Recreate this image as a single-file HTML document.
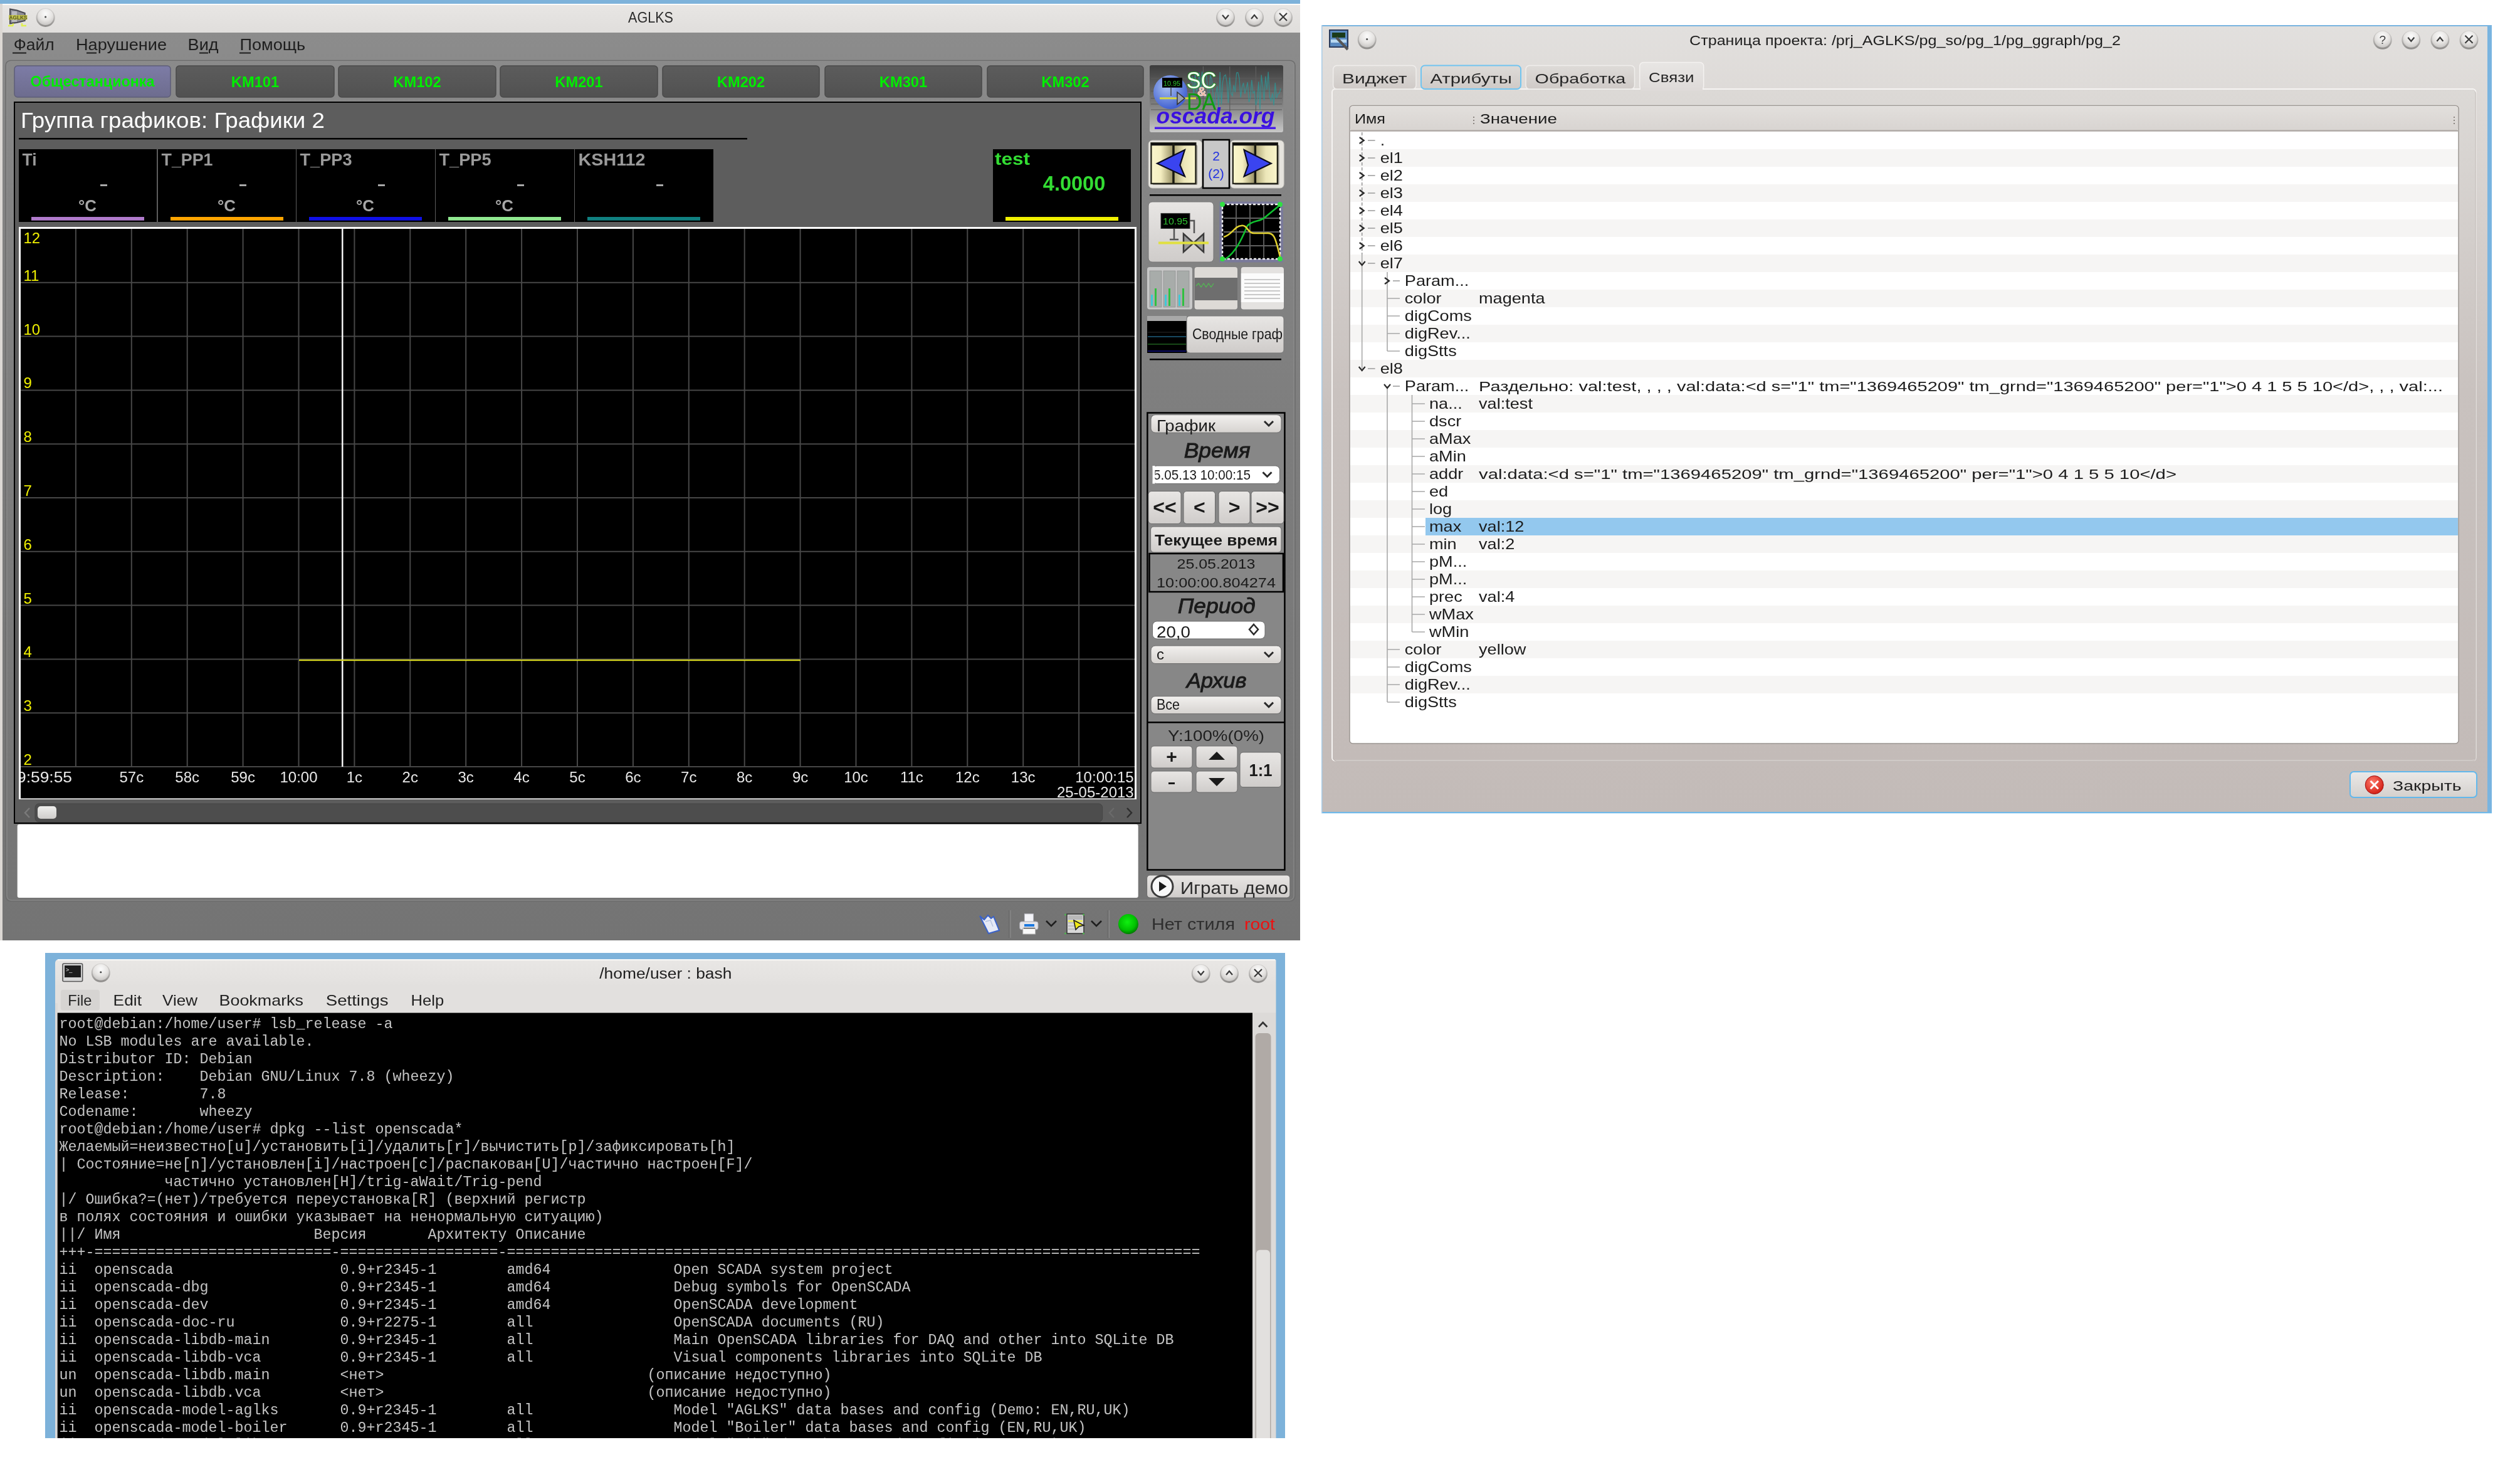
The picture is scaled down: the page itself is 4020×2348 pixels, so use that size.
<!DOCTYPE html>
<html><head><meta charset="utf-8"><style>html,body{margin:0;padding:0;width:4020px;height:2348px;overflow:hidden;background:#fff}</style></head><body><svg width="4020" height="2348" viewBox="0 0 4020 2348" style="position:absolute;left:0;top:0;will-change:transform"><defs>
<linearGradient id="gTitle" x1="0" y1="0" x2="0" y2="1"><stop offset="0" stop-color="#e8e6e4"/><stop offset="1" stop-color="#e0dedc"/></linearGradient>
<linearGradient id="gRing" x1="0" y1="0" x2="0" y2="1"><stop offset="0" stop-color="#d6d4d2"/><stop offset="0.5" stop-color="#b8b6b4"/><stop offset="1" stop-color="#8c8a88"/></linearGradient>
<linearGradient id="gTitle2" x1="0" y1="0" x2="0" y2="1"><stop offset="0" stop-color="#e9e7e5"/><stop offset="0.75" stop-color="#e2e0de"/><stop offset="1" stop-color="#e2e0de"/></linearGradient>
<radialGradient id="gBtn" cx="0.5" cy="0.3" r="0.7"><stop offset="0" stop-color="#fbfbfb"/><stop offset="0.6" stop-color="#e6e4e2"/><stop offset="1" stop-color="#c8c6c4"/></radialGradient>
<linearGradient id="gMain" x1="0" y1="0" x2="0" y2="1"><stop offset="0" stop-color="#8c8c8c"/><stop offset="0.12" stop-color="#868686"/><stop offset="0.5" stop-color="#7c7c7c"/><stop offset="1" stop-color="#747474"/></linearGradient>
<linearGradient id="gTabSel" x1="0" y1="0" x2="0" y2="1"><stop offset="0" stop-color="#7d7ca6"/><stop offset="1" stop-color="#6d6c8e"/></linearGradient>
<linearGradient id="gTab" x1="0" y1="0" x2="0" y2="1"><stop offset="0" stop-color="#5c5c5c"/><stop offset="1" stop-color="#515151"/></linearGradient>
<linearGradient id="gHandle" x1="0" y1="0" x2="0" y2="1"><stop offset="0" stop-color="#eeeeec"/><stop offset="1" stop-color="#cfcdcb"/></linearGradient>
<linearGradient id="gBtnG" x1="0" y1="0" x2="0" y2="1"><stop offset="0" stop-color="#e8e6e4"/><stop offset="1" stop-color="#cfccca"/></linearGradient>
<linearGradient id="gCombo" x1="0" y1="0" x2="0" y2="1"><stop offset="0" stop-color="#f2f0ee"/><stop offset="1" stop-color="#d6d3d0"/></linearGradient>
<linearGradient id="gLogo" x1="0" y1="0" x2="0" y2="1"><stop offset="0" stop-color="#3c3c3c"/><stop offset="0.55" stop-color="#7a7a7a"/><stop offset="1" stop-color="#c8c8c8"/></linearGradient>
<radialGradient id="gGlobe" cx="0.4" cy="0.35" r="0.7"><stop offset="0" stop-color="#a8c0f0"/><stop offset="1" stop-color="#3a5ad0"/></radialGradient>
<radialGradient id="gGreen" cx="0.45" cy="0.4" r="0.6"><stop offset="0" stop-color="#10f010"/><stop offset="0.7" stop-color="#00c000"/><stop offset="1" stop-color="#007a00"/></radialGradient>
<radialGradient id="gRed" cx="0.4" cy="0.35" r="0.7"><stop offset="0" stop-color="#ff7a6a"/><stop offset="1" stop-color="#d01a10"/></radialGradient>
<linearGradient id="gDlg" x1="0" y1="0" x2="0" y2="1"><stop offset="0" stop-color="#e2e0de"/><stop offset="0.12" stop-color="#dcd8d5"/><stop offset="0.5" stop-color="#c8c1be"/><stop offset="1" stop-color="#c3bbb8"/></linearGradient>
<linearGradient id="gPane" x1="0" y1="0" x2="0" y2="1"><stop offset="0" stop-color="#dcd9d6"/><stop offset="0.45" stop-color="#c9c2bf"/><stop offset="1" stop-color="#c3bbb8"/></linearGradient>
<linearGradient id="gTabD" x1="0" y1="0" x2="0" y2="1"><stop offset="0" stop-color="#dedbd8"/><stop offset="1" stop-color="#cfcac7"/></linearGradient>
<linearGradient id="gTabDS" x1="0" y1="0" x2="0" y2="1"><stop offset="0" stop-color="#e8e6e4"/><stop offset="1" stop-color="#dedad8"/></linearGradient>
<linearGradient id="gHdr" x1="0" y1="0" x2="0" y2="1"><stop offset="0" stop-color="#e2dfdc"/><stop offset="1" stop-color="#d8d4d1"/></linearGradient>
<linearGradient id="gBtnD" x1="0" y1="0" x2="0" y2="1"><stop offset="0" stop-color="#ebe9e7"/><stop offset="1" stop-color="#d4d0cd"/></linearGradient>
<linearGradient id="gNavL" x1="0" y1="0" x2="1" y2="0"><stop offset="0" stop-color="#faf6cc"/><stop offset="0.45" stop-color="#f4eec0"/><stop offset="1" stop-color="#9c9468"/></linearGradient>
<linearGradient id="gNavR" x1="0" y1="0" x2="1" y2="0"><stop offset="0" stop-color="#a8a070"/><stop offset="0.5" stop-color="#ece6b8"/><stop offset="1" stop-color="#faf6cc"/></linearGradient>
</defs>
<rect x="0" y="0" width="2074" height="1500" fill="#777"/>
<rect x="0" y="0" width="2074" height="6" fill="#7db2da"/>
<rect x="0" y="6" width="2074" height="46" fill="url(#gTitle)"/>
<rect x="0" y="6" width="2074" height="2" fill="#fbfbfa"/>
<rect x="0" y="6" width="4" height="1494" fill="#dcd8d4"/>
<text x="1002" y="36" font-family="Liberation Sans" font-size="23" fill="#2b2b2b" textLength="72" lengthAdjust="spacingAndGlyphs">AGLKS</text>
<circle cx="1955" cy="28" r="15" fill="url(#gRing)"/>
<circle cx="1955" cy="27" r="13" fill="url(#gBtn)"/>
<path d="M1950,24 L1955,30 L1960,24" fill="none" stroke="#3a3a3a" stroke-width="2.2"/>
<circle cx="2001" cy="28" r="15" fill="url(#gRing)"/>
<circle cx="2001" cy="27" r="13" fill="url(#gBtn)"/>
<path d="M1996,30 L2001,24 L2006,30" fill="none" stroke="#3a3a3a" stroke-width="2.2"/>
<circle cx="2047" cy="28" r="15" fill="url(#gRing)"/>
<circle cx="2047" cy="27" r="13" fill="url(#gBtn)"/>
<path d="M2041,21 L2053,33 M2053,21 L2041,33" fill="none" stroke="#3a3a3a" stroke-width="2.2"/>
<circle cx="72.6" cy="28" r="15" fill="url(#gRing)"/>
<circle cx="72.6" cy="27" r="13" fill="url(#gBtn)"/>
<circle cx="72.6" cy="27" r="1.5" fill="#444"/>
<path d="M16,14.4 L27,16.5 L39.7,21 L39.7,33 L27,36 L16,37.5 Z" fill="#8e8e98" stroke="#4a4a52" stroke-width="2"/>
<rect x="19" y="18" width="8" height="17" fill="#b8b8c0"/>
<rect x="14" y="24" width="29.5" height="7.5" fill="#c8c840" opacity="0.85"/>
<text x="14.5" y="31" font-family="Liberation Sans" font-size="9" fill="#5a5a20" font-weight="bold" textLength="29" lengthAdjust="spacingAndGlyphs">AGLKS</text>
<path d="M13,41 L20,41 L21.5,37.5" fill="none" stroke="#e0f050" stroke-width="2.6"/>
<path d="M35,37 L35,41 L42,41" fill="none" stroke="#e0f050" stroke-width="2.6"/>
<rect x="4" y="52" width="2070" height="1448" fill="url(#gMain)"/>
<text x="21.7" y="80.4" font-family="Liberation Sans" font-size="25" fill="#1e1e1e" textLength="65" lengthAdjust="spacingAndGlyphs">Файл</text>
<text x="121" y="80.4" font-family="Liberation Sans" font-size="25" fill="#1e1e1e" textLength="145" lengthAdjust="spacingAndGlyphs">Нарушение</text>
<text x="299.6" y="80.4" font-family="Liberation Sans" font-size="25" fill="#1e1e1e" textLength="49" lengthAdjust="spacingAndGlyphs">Вид</text>
<text x="382.4" y="80.4" font-family="Liberation Sans" font-size="25" fill="#1e1e1e" textLength="104.8" lengthAdjust="spacingAndGlyphs">Помощь</text>
<rect x="20" y="83.5" width="22" height="2" fill="#1e1e1e"/>
<rect x="138" y="83.5" width="16" height="2" fill="#1e1e1e"/>
<rect x="318" y="83.5" width="14" height="2" fill="#1e1e1e"/>
<rect x="382" y="83.5" width="18" height="2" fill="#1e1e1e"/>
<rect x="9" y="96.5" width="2057" height="1341" fill="none" rx="8" stroke="#6c6c6c" stroke-width="1.5"/>
<rect x="11" y="98" width="2053" height="1338" fill="none" rx="7" stroke="#8e8e8e" stroke-width="1"/>
<rect x="23" y="105" width="249" height="50" fill="url(#gTabSel)" rx="5" stroke="#5e5e78" stroke-width="1.5"/>
<text x="147.5" y="138" font-family="Liberation Sans" font-size="24" fill="#00ee00" font-weight="bold" text-anchor="middle" textLength="198" lengthAdjust="spacingAndGlyphs">Общестанционка</text>
<rect x="281" y="105" width="252" height="50" fill="url(#gTab)" rx="5" stroke="#4a4a4a" stroke-width="1.5"/>
<text x="407.0" y="138.6" font-family="Liberation Sans" font-size="24" fill="#00ee00" font-weight="bold" text-anchor="middle" textLength="76.5" lengthAdjust="spacingAndGlyphs">KM101</text>
<rect x="540" y="105" width="251" height="50" fill="url(#gTab)" rx="5" stroke="#4a4a4a" stroke-width="1.5"/>
<text x="665.5" y="138.6" font-family="Liberation Sans" font-size="24" fill="#00ee00" font-weight="bold" text-anchor="middle" textLength="76.5" lengthAdjust="spacingAndGlyphs">KM102</text>
<rect x="798" y="105" width="251" height="50" fill="url(#gTab)" rx="5" stroke="#4a4a4a" stroke-width="1.5"/>
<text x="923.5" y="138.6" font-family="Liberation Sans" font-size="24" fill="#00ee00" font-weight="bold" text-anchor="middle" textLength="76.5" lengthAdjust="spacingAndGlyphs">KM201</text>
<rect x="1057" y="105" width="250" height="50" fill="url(#gTab)" rx="5" stroke="#4a4a4a" stroke-width="1.5"/>
<text x="1182.0" y="138.6" font-family="Liberation Sans" font-size="24" fill="#00ee00" font-weight="bold" text-anchor="middle" textLength="76.5" lengthAdjust="spacingAndGlyphs">KM202</text>
<rect x="1316" y="105" width="250" height="50" fill="url(#gTab)" rx="5" stroke="#4a4a4a" stroke-width="1.5"/>
<text x="1441.0" y="138.6" font-family="Liberation Sans" font-size="24" fill="#00ee00" font-weight="bold" text-anchor="middle" textLength="76.5" lengthAdjust="spacingAndGlyphs">KM301</text>
<rect x="1575" y="105" width="249" height="50" fill="url(#gTab)" rx="5" stroke="#4a4a4a" stroke-width="1.5"/>
<text x="1699.5" y="138.6" font-family="Liberation Sans" font-size="24" fill="#00ee00" font-weight="bold" text-anchor="middle" textLength="76.5" lengthAdjust="spacingAndGlyphs">KM302</text>
<rect x="22" y="162" width="1799" height="1152" fill="#5d5d5d"/>
<rect x="23" y="163" width="1797" height="1150" fill="none" stroke="#000" stroke-width="2"/>
<text x="33" y="203.7" font-family="Liberation Sans" font-size="35" fill="#ffffff" textLength="485" lengthAdjust="spacingAndGlyphs">Группа графиков: Графики 2</text>
<rect x="30" y="220" width="1162" height="2.5" fill="#000"/>
<rect x="30" y="238" width="220" height="116" fill="#000"/>
<text x="35.5" y="263.6" font-family="Liberation Sans" font-size="27.5" fill="#9a9a9a" font-weight="bold" textLength="23" lengthAdjust="spacingAndGlyphs">Ti</text>
<rect x="160" y="294" width="11" height="3" fill="#a8a8a8"/>
<text x="125" y="337" font-family="Liberation Sans" font-size="26" fill="#a8a8a8" font-weight="bold" textLength="29" lengthAdjust="spacingAndGlyphs">°C</text>
<rect x="50" y="346" width="180" height="5.7" fill="#b07acc"/>
<rect x="252" y="238" width="220" height="116" fill="#000"/>
<text x="257.5" y="263.6" font-family="Liberation Sans" font-size="27.5" fill="#9a9a9a" font-weight="bold" textLength="82" lengthAdjust="spacingAndGlyphs">T_PP1</text>
<rect x="382" y="294" width="11" height="3" fill="#a8a8a8"/>
<text x="347" y="337" font-family="Liberation Sans" font-size="26" fill="#a8a8a8" font-weight="bold" textLength="29" lengthAdjust="spacingAndGlyphs">°C</text>
<rect x="272" y="346" width="180" height="5.7" fill="#ffa500"/>
<rect x="473" y="238" width="221" height="116" fill="#000"/>
<text x="478.5" y="263.6" font-family="Liberation Sans" font-size="27.5" fill="#9a9a9a" font-weight="bold" textLength="83" lengthAdjust="spacingAndGlyphs">T_PP3</text>
<rect x="603" y="294" width="11" height="3" fill="#a8a8a8"/>
<text x="568" y="337" font-family="Liberation Sans" font-size="26" fill="#a8a8a8" font-weight="bold" textLength="29" lengthAdjust="spacingAndGlyphs">°C</text>
<rect x="493" y="346" width="180" height="5.7" fill="#1010e8"/>
<rect x="695" y="238" width="221" height="116" fill="#000"/>
<text x="700.5" y="263.6" font-family="Liberation Sans" font-size="27.5" fill="#9a9a9a" font-weight="bold" textLength="83" lengthAdjust="spacingAndGlyphs">T_PP5</text>
<rect x="825" y="294" width="11" height="3" fill="#a8a8a8"/>
<text x="790" y="337" font-family="Liberation Sans" font-size="26" fill="#a8a8a8" font-weight="bold" textLength="29" lengthAdjust="spacingAndGlyphs">°C</text>
<rect x="715" y="346" width="180" height="5.7" fill="#90e890"/>
<rect x="917" y="238" width="221" height="116" fill="#000"/>
<text x="922.5" y="263.6" font-family="Liberation Sans" font-size="27.5" fill="#9a9a9a" font-weight="bold" textLength="107" lengthAdjust="spacingAndGlyphs">KSH112</text>
<rect x="1047" y="294" width="11" height="3" fill="#a8a8a8"/>
<rect x="937" y="346" width="180" height="5.7" fill="#108080"/>
<rect x="1584" y="238" width="220" height="116" fill="#000"/>
<text x="1587" y="263.3" font-family="Liberation Sans" font-size="27.5" fill="#33dd33" font-weight="bold" textLength="56" lengthAdjust="spacingAndGlyphs">test</text>
<text x="1663.8" y="304.4" font-family="Liberation Sans" font-size="33" fill="#33dd33" font-weight="bold" textLength="99.5" lengthAdjust="spacingAndGlyphs">4.0000</text>
<rect x="1604" y="346" width="180" height="6" fill="#f0f000"/>
<rect x="30" y="362" width="1783" height="913" fill="#fff"/>
<rect x="33" y="365" width="1777" height="908.5" fill="#000"/>
<path d="M120.9,365V1223 M209.8,365V1223 M298.7,365V1223 M387.6,365V1223 M476.5,365V1223 M565.4,365V1223 M654.3,365V1223 M743.2,365V1223 M832.1,365V1223 M921.0,365V1223 M1009.9,365V1223 M1098.8,365V1223 M1187.7,365V1223 M1276.6,365V1223 M1365.5,365V1223 M1454.4,365V1223 M1543.3,365V1223 M1632.2,365V1223 M1721.1,365V1223 M33,450.8H1810 M33,536.6H1810 M33,622.4H1810 M33,708.2H1810 M33,794.0H1810 M33,879.8H1810 M33,965.6H1810 M33,1051.4H1810 M33,1137.2H1810 M33,1223.0H1810" fill="none" stroke="#474747" stroke-width="2"/>
<text x="37.5" y="388" font-family="Liberation Sans" font-size="24" fill="#f0f000">12</text>
<text x="37.5" y="447.8" font-family="Liberation Sans" font-size="24" fill="#f0f000">11</text>
<text x="37.5" y="533.6" font-family="Liberation Sans" font-size="24" fill="#f0f000">10</text>
<text x="37.5" y="619.4" font-family="Liberation Sans" font-size="24" fill="#f0f000">9</text>
<text x="37.5" y="705.2" font-family="Liberation Sans" font-size="24" fill="#f0f000">8</text>
<text x="37.5" y="791.0" font-family="Liberation Sans" font-size="24" fill="#f0f000">7</text>
<text x="37.5" y="876.8" font-family="Liberation Sans" font-size="24" fill="#f0f000">6</text>
<text x="37.5" y="962.6" font-family="Liberation Sans" font-size="24" fill="#f0f000">5</text>
<text x="37.5" y="1048.4" font-family="Liberation Sans" font-size="24" fill="#f0f000">4</text>
<text x="37.5" y="1134.1999999999998" font-family="Liberation Sans" font-size="24" fill="#f0f000">3</text>
<text x="37.5" y="1220.0" font-family="Liberation Sans" font-size="24" fill="#f0f000">2</text>
<rect x="545" y="365" width="2.5" height="858" fill="#f4f4f4"/>
<rect x="477" y="1052" width="800" height="2.2" fill="#d8d820"/>
<text x="209.8" y="1247.7" font-family="Liberation Sans" font-size="24" fill="#e8e8e8" text-anchor="middle">57с</text>
<text x="298.70000000000005" y="1247.7" font-family="Liberation Sans" font-size="24" fill="#e8e8e8" text-anchor="middle">58с</text>
<text x="387.6" y="1247.7" font-family="Liberation Sans" font-size="24" fill="#e8e8e8" text-anchor="middle">59с</text>
<text x="476.5" y="1247.7" font-family="Liberation Sans" font-size="24" fill="#e8e8e8" text-anchor="middle">10:00</text>
<text x="565.4000000000001" y="1247.7" font-family="Liberation Sans" font-size="24" fill="#e8e8e8" text-anchor="middle">1с</text>
<text x="654.3000000000001" y="1247.7" font-family="Liberation Sans" font-size="24" fill="#e8e8e8" text-anchor="middle">2с</text>
<text x="743.2" y="1247.7" font-family="Liberation Sans" font-size="24" fill="#e8e8e8" text-anchor="middle">3с</text>
<text x="832.1" y="1247.7" font-family="Liberation Sans" font-size="24" fill="#e8e8e8" text-anchor="middle">4с</text>
<text x="921.0" y="1247.7" font-family="Liberation Sans" font-size="24" fill="#e8e8e8" text-anchor="middle">5с</text>
<text x="1009.9000000000001" y="1247.7" font-family="Liberation Sans" font-size="24" fill="#e8e8e8" text-anchor="middle">6с</text>
<text x="1098.8000000000002" y="1247.7" font-family="Liberation Sans" font-size="24" fill="#e8e8e8" text-anchor="middle">7с</text>
<text x="1187.7" y="1247.7" font-family="Liberation Sans" font-size="24" fill="#e8e8e8" text-anchor="middle">8с</text>
<text x="1276.6000000000001" y="1247.7" font-family="Liberation Sans" font-size="24" fill="#e8e8e8" text-anchor="middle">9с</text>
<text x="1365.5" y="1247.7" font-family="Liberation Sans" font-size="24" fill="#e8e8e8" text-anchor="middle">10с</text>
<text x="1454.4" y="1247.7" font-family="Liberation Sans" font-size="24" fill="#e8e8e8" text-anchor="middle">11с</text>
<text x="1543.3000000000002" y="1247.7" font-family="Liberation Sans" font-size="24" fill="#e8e8e8" text-anchor="middle">12с</text>
<text x="1632.2" y="1247.7" font-family="Liberation Sans" font-size="24" fill="#e8e8e8" text-anchor="middle">13с</text>
<clipPath id="cpChart"><rect x="33" y="365" width="1777" height="907"/></clipPath>
<text x="115" y="1247.7" font-family="Liberation Sans" font-size="24" fill="#e8e8e8" text-anchor="end" textLength="88" lengthAdjust="spacingAndGlyphs" clip-path="url(#cpChart)">9:59:55</text>
<text x="1808.7" y="1247.7" font-family="Liberation Sans" font-size="24" fill="#e8e8e8" text-anchor="end">10:00:15</text>
<text x="1808.7" y="1272" font-family="Liberation Sans" font-size="24" fill="#e8e8e8" text-anchor="end" clip-path="url(#cpChart)">25-05-2013</text>
<rect x="56" y="1282" width="1702.6" height="29" fill="#4d4d4d" rx="6" stroke="#444" stroke-width="1"/>
<rect x="60" y="1286" width="30" height="20" fill="url(#gHandle)" rx="5"/>
<path d="M47,1289 L40,1296.5 L47,1304" fill="none" stroke="#7a7a7a" stroke-width="2.5"/>
<path d="M1777,1289 L1770,1296.5 L1777,1304" fill="none" stroke="#6a6a6a" stroke-width="2.5"/>
<path d="M1798,1289 L1805,1296.5 L1798,1304" fill="none" stroke="#2e2e2e" stroke-width="2.5"/>
<rect x="27.7" y="1315" width="1788" height="117" fill="#fff" rx="3"/>
<rect x="1834" y="104" width="213" height="107" fill="url(#gLogo)" rx="3"/>
<line x1="1919.4" y1="106" x2="1919.4" y2="178" stroke="#5e5e5e" stroke-width="1.2"/>
<line x1="1961.8" y1="106" x2="1961.8" y2="178" stroke="#5e5e5e" stroke-width="1.2"/>
<line x1="2003.4" y1="106" x2="2003.4" y2="178" stroke="#5e5e5e" stroke-width="1.2"/>
<line x1="1836" y1="125" x2="2045" y2="125" stroke="#5a5a5a" stroke-width="1.2"/>
<line x1="1836" y1="134" x2="2045" y2="134" stroke="#5a5a5a" stroke-width="1.2"/>
<line x1="1836" y1="145.4" x2="2045" y2="145.4" stroke="#5a5a5a" stroke-width="1.2"/>
<line x1="1836" y1="156.8" x2="2045" y2="156.8" stroke="#5a5a5a" stroke-width="1.2"/>
<line x1="1836" y1="166" x2="2045" y2="166" stroke="#5a5a5a" stroke-width="1.2"/>
<line x1="1836" y1="175" x2="2045" y2="175" stroke="#5a5a5a" stroke-width="1.2"/>
<path d="M1900.0,132.7 L1902.2,121.7 L1904.4,153.7 L1906.6,116.6 L1908.8,146.3 L1911.0,135.4 L1913.2,115.7 L1915.4,144.5 L1917.6,114.4 L1919.8,139.8 L1922.0,116.5 L1924.2,117.8 L1926.4,139.2 L1928.6,164.9 L1930.8,119.9 L1933.0,126.3 L1935.2,152.2 L1937.4,172.7 L1939.6,148.9 L1941.8,137.4 L1944.0,174.5 L1946.2,115.0 L1948.4,166.9 L1950.6,130.5 L1952.8,121.2 L1955.0,119.5 L1957.2,131.7 L1959.4,164.2 L1961.6,123.6 L1963.8,149.2 L1966.0,152.9 L1968.2,135.8 L1970.4,147.1 L1972.6,116.0 L1974.8,115.8 L1977.0,125.2 L1979.2,155.5 L1981.4,139.4 L1983.6,132.1 L1985.8,149.5 L1988.0,141.0 L1990.2,131.2 L1992.4,162.8 L1994.6,156.7 L1996.8,127.6 L1999.0,148.8 L2001.2,145.6 L2003.4,168.0 L2005.6,158.7 L2007.8,130.4 L2010.0,174.7 L2012.2,119.6 L2014.4,138.8 L2016.6,160.5 L2018.8,121.7 L2021.0,143.3 L2023.2,114.5 L2025.4,154.8 L2027.6,160.9 L2029.8,148.7 L2032.0,168.0 L2034.2,132.1 L2036.4,156.5 L2038.6,150.0 L2040.8,149.1 L2043.0,141.2" fill="none" stroke="#2a9a9a" stroke-width="1.3" opacity="0.75"/>
<circle cx="1867" cy="147" r="27" fill="url(#gGlobe)"/>
<rect x="1854" y="124" width="32" height="15.7" fill="#000"/>
<text x="1856" y="136.5" font-family="Liberation Sans" font-size="11" fill="#30c030" textLength="27" lengthAdjust="spacingAndGlyphs">10.95</text>
<line x1="1868" y1="140" x2="1868" y2="153" stroke="#444" stroke-width="1.5"/>
<line x1="1850" y1="156.8" x2="1908" y2="156.8" stroke="#d8d840" stroke-width="3"/>
<path d="M1878,147 L1890,156.8 L1878,166.6 Z" fill="#9aa0b0" stroke="#333" stroke-width="1.5"/>
<text x="1892.5" y="140.5" font-family="Liberation Sans" font-size="36" fill="#f4fff4" textLength="48" lengthAdjust="spacingAndGlyphs" stroke="#18a018" stroke-width="1.6" paint-order="stroke">SC</text>
<text x="1910" y="153" font-family="Liberation Sans" font-size="20" fill="#f0a890" font-weight="bold" stroke="#fff" stroke-width="0.6">&amp;</text>
<text x="1893" y="174.8" font-family="Liberation Sans" font-size="36" fill="#109a10" textLength="47" lengthAdjust="spacingAndGlyphs">DA</text>
<text x="1844.5" y="196.8" font-family="Liberation Sans" font-size="35" fill="#3a10e0" font-weight="bold" font-style="italic" textLength="189" lengthAdjust="spacingAndGlyphs">oscada.org</text>
<rect x="1842" y="202.5" width="193" height="3.5" fill="#4a20e8"/>
<rect x="1832.2" y="224" width="85.5" height="76" fill="#e6e4de" rx="6" stroke="#c8c6c0" stroke-width="1"/>
<rect x="1838.2" y="231" width="72" height="64" fill="#5a5850" rx="2" opacity="0.55"/>
<rect x="1836.4" y="228.2" width="34" height="64.6" fill="url(#gNavL)"/>
<rect x="1870.4" y="228.2" width="37" height="64.6" fill="url(#gNavR)"/>
<rect x="1836.4" y="228.2" width="71" height="64.6" fill="none" stroke="#1e1e14" stroke-width="2.2"/>
<rect x="1836.4" y="228.2" width="71" height="4" fill="#111"/>
<rect x="1870.2" y="228.2" width="3.5" height="64.6" fill="#1a1a10"/>
<rect x="1962.6" y="224" width="85.5" height="76" fill="#e6e4de" rx="6" stroke="#c8c6c0" stroke-width="1"/>
<rect x="1968.6" y="231" width="72" height="64" fill="#5a5850" rx="2" opacity="0.55"/>
<rect x="1966.8" y="228.2" width="34" height="64.6" fill="url(#gNavL)"/>
<rect x="2000.8" y="228.2" width="37" height="64.6" fill="url(#gNavR)"/>
<rect x="1966.8" y="228.2" width="71" height="64.6" fill="none" stroke="#1e1e14" stroke-width="2.2"/>
<rect x="1966.8" y="228.2" width="71" height="4" fill="#111"/>
<rect x="2000.6" y="228.2" width="3.5" height="64.6" fill="#1a1a10"/>
<path d="M1846,260.8 L1890,239 L1882.4,263.5 L1890,281.4 Z" fill="#3a44f0" stroke="#0a0a20" stroke-width="2.2"/>
<path d="M2027.8,260.8 L1984.6,239 L1991,263.5 L1984.6,281.4 Z" fill="#3a44f0" stroke="#0a0a20" stroke-width="2.2"/>
<rect x="1919" y="223" width="42" height="77" fill="#c8c8c8" stroke="#000" stroke-width="2.5"/>
<text x="1940" y="256" font-family="Liberation Sans" font-size="21" fill="#2030e0" text-anchor="middle">2</text>
<text x="1940" y="284" font-family="Liberation Sans" font-size="21" fill="#2030e0" text-anchor="middle">(2)</text>
<rect x="1834" y="310" width="210" height="2.5" fill="#000"/>
<rect x="1832" y="322" width="104" height="96" fill="url(#gBtnG)" rx="6" stroke="#777" stroke-width="1"/>
<rect x="1852" y="340.4" width="46" height="24" fill="#000" stroke="#333" stroke-width="1"/>
<text x="1855" y="358" font-family="Liberation Sans" font-size="15" fill="#30c030" textLength="40" lengthAdjust="spacingAndGlyphs">10.95</text>
<line x1="1873" y1="365" x2="1873" y2="382" stroke="#555" stroke-width="2.5"/>
<line x1="1866" y1="382" x2="1880" y2="382" stroke="#555" stroke-width="2.5"/>
<path d="M1898,352 H1905 V372" fill="none" stroke="#555" stroke-width="2.5"/>
<path d="M1888,373 L1920,402 L1920,373 L1888,402 Z" fill="#9a9a9a" stroke="#3a3a3a" stroke-width="2.5"/>
<rect x="1848" y="385.5" width="80" height="4" fill="#e0e040"/>
<rect x="1945" y="321.5" width="102" height="97" fill="#7a7a9a"/>
<rect x="1950" y="326" width="92" height="87" fill="#000" stroke="#f0f0f0" stroke-width="2.5" stroke-dasharray="4,3"/>
<path d="M1972,328V411 M1994,328V411 M2016,328V411 M1952,348H2040 M1952,370H2040 M1952,392H2040" fill="none" stroke="#606060" stroke-width="1.8"/>
<path d="M1955,413 C1975,400 1985,370 1990,360 C2000,350 2010,355 2020,345 L2043,326" fill="none" stroke="#10c030" stroke-width="2.6"/>
<path d="M1952,378 C1965,375 1970,360 1980,360 C1990,358 1990,372 2000,372 L2020,372 C2035,370 2035,385 2043,413" fill="none" stroke="#e0d030" stroke-width="2.6"/>
<circle cx="1950" cy="326" r="4" fill="#30e040"/>
<circle cx="2042" cy="326" r="4" fill="#30e040"/>
<circle cx="1950" cy="413" r="4" fill="#30e040"/>
<circle cx="2042" cy="413" r="4" fill="#30e040"/>
<rect x="1830" y="426" width="72" height="67.5" fill="#c8c8c8" rx="4"/>
<rect x="1834" y="432" width="19" height="58" fill="#a8acaa" stroke="#888" stroke-width="0.6"/>
<rect x="1842" y="460" width="3" height="28" fill="#30c040"/>
<rect x="1836" y="470" width="3" height="18" fill="#40c8d8"/>
<rect x="1856" y="432" width="19" height="58" fill="#a8acaa" stroke="#888" stroke-width="0.6"/>
<rect x="1864" y="460" width="3" height="28" fill="#30c040"/>
<rect x="1858" y="470" width="3" height="18" fill="#40c8d8"/>
<rect x="1878" y="432" width="19" height="58" fill="#a8acaa" stroke="#888" stroke-width="0.6"/>
<rect x="1886" y="460" width="3" height="28" fill="#30c040"/>
<rect x="1880" y="470" width="3" height="18" fill="#40c8d8"/>
<rect x="1905.6" y="426" width="68.4" height="67.5" fill="#dddad6" rx="4"/>
<rect x="1905.6" y="443" width="68.4" height="36" fill="#6e6e6e"/>
<path d="M1908,456 L1912,452 L1916,458 L1920,452 L1924,458 L1928,452 L1932,458 L1936,452" fill="none" stroke="#50c050" stroke-width="1.2"/>
<rect x="1979.8" y="426" width="68.2" height="67.5" fill="#e4e2e0" rx="4"/>
<rect x="1979.8" y="436" width="68.2" height="46" fill="#fbfbfb"/>
<line x1="1985" y1="446" x2="2042" y2="446" stroke="#b8b8b8" stroke-width="1.3"/>
<line x1="1985" y1="452" x2="2042" y2="452" stroke="#b8b8b8" stroke-width="1.3"/>
<line x1="1985" y1="458" x2="2042" y2="458" stroke="#b8b8b8" stroke-width="1.3"/>
<line x1="1985" y1="464" x2="2042" y2="464" stroke="#b8b8b8" stroke-width="1.3"/>
<line x1="1985" y1="470" x2="2042" y2="470" stroke="#b8b8b8" stroke-width="1.3"/>
<line x1="1985" y1="476" x2="2042" y2="476" stroke="#b8b8b8" stroke-width="1.3"/>
<rect x="1830" y="504" width="63" height="59" fill="#000"/>
<rect x="1830" y="504" width="63" height="8" fill="#a8a8a8"/>
<line x1="1831" y1="530" x2="1892" y2="530" stroke="#2a2a2a" stroke-width="1"/>
<line x1="1831" y1="537" x2="1892" y2="537" stroke="#206080" stroke-width="1.5"/>
<line x1="1831" y1="549" x2="1892" y2="549" stroke="#206020" stroke-width="1.5"/>
<line x1="1831" y1="560" x2="1892" y2="560" stroke="#101080" stroke-width="1.5"/>
<rect x="1893" y="504" width="155" height="59" fill="url(#gBtnG)" rx="5" stroke="#777" stroke-width="1"/>
<text x="1902" y="541" font-family="Liberation Sans" font-size="24" fill="#1a1a1a" textLength="144" lengthAdjust="spacingAndGlyphs">Сводные граф</text>
<rect x="1834" y="572" width="210" height="2.5" fill="#000"/>
<rect x="1830.4" y="658.5" width="219" height="729" fill="#878787" stroke="#000" stroke-width="2.5"/>
<rect x="1836" y="661.7" width="208" height="28.5" fill="url(#gCombo)" rx="7" stroke="#6a6a6a" stroke-width="1"/>
<path d="M2017,671.95 L2024,678.95 L2031,671.95" fill="none" stroke="#2a2a2a" stroke-width="3"/>
<text x="1845" y="688" font-family="Liberation Sans" font-size="26" fill="#1a1a1a" textLength="94" lengthAdjust="spacingAndGlyphs">График</text>
<text x="1941.7" y="730" font-family="Liberation Sans" font-size="34" fill="#1a1a1a" font-style="italic" text-anchor="middle" textLength="106" lengthAdjust="spacingAndGlyphs" stroke="#1a1a1a" stroke-width="0.9">Время</text>
<rect x="1838.5" y="743" width="203" height="28.5" fill="#fff" rx="7" stroke="#6a6a6a" stroke-width="1"/>
<text x="1840" y="764.5" font-family="Liberation Sans" font-size="22" fill="#1a1a1a" textLength="155" lengthAdjust="spacingAndGlyphs">5.05.13 10:00:15</text>
<path d="M2014.5,753.25 L2021.5,760.25 L2028.5,753.25" fill="none" stroke="#2a2a2a" stroke-width="3"/>
<rect x="1838.5" y="743" width="4" height="28.5" fill="#fff"/>
<rect x="1832" y="783.5" width="52" height="52" fill="url(#gBtnG)" rx="5" stroke="#6a6a6a" stroke-width="1"/>
<text x="1858.0" y="820" font-family="Liberation Sans" font-size="32" fill="#1a1a1a" font-weight="bold" text-anchor="middle">&lt;&lt;</text>
<rect x="1888" y="783.5" width="50.5" height="52" fill="url(#gBtnG)" rx="5" stroke="#6a6a6a" stroke-width="1"/>
<text x="1913.25" y="820" font-family="Liberation Sans" font-size="32" fill="#1a1a1a" font-weight="bold" text-anchor="middle">&lt;</text>
<rect x="1944" y="783.5" width="50" height="52" fill="url(#gBtnG)" rx="5" stroke="#6a6a6a" stroke-width="1"/>
<text x="1969.0" y="820" font-family="Liberation Sans" font-size="32" fill="#1a1a1a" font-weight="bold" text-anchor="middle">&gt;</text>
<rect x="1996" y="783.5" width="52" height="52" fill="url(#gBtnG)" rx="5" stroke="#6a6a6a" stroke-width="1"/>
<text x="2022.0" y="820" font-family="Liberation Sans" font-size="32" fill="#1a1a1a" font-weight="bold" text-anchor="middle">&gt;&gt;</text>
<rect x="1835.6" y="840" width="208.4" height="41" fill="url(#gBtnG)" rx="5" stroke="#6a6a6a" stroke-width="1"/>
<text x="1940" y="870" font-family="Liberation Sans" font-size="24" fill="#1a1a1a" font-weight="bold" text-anchor="middle" textLength="196" lengthAdjust="spacingAndGlyphs">Текущее время</text>
<rect x="1833.5" y="883" width="213.5" height="61" fill="#878787" stroke="#000" stroke-width="2.5"/>
<text x="1940" y="907" font-family="Liberation Sans" font-size="22" fill="#1a1a1a" text-anchor="middle" textLength="125" lengthAdjust="spacingAndGlyphs">25.05.2013</text>
<text x="1940" y="937" font-family="Liberation Sans" font-size="22" fill="#1a1a1a" text-anchor="middle" textLength="190" lengthAdjust="spacingAndGlyphs">10:00:00.804274</text>
<text x="1940.7" y="978" font-family="Liberation Sans" font-size="34" fill="#1a1a1a" font-style="italic" text-anchor="middle" textLength="124" lengthAdjust="spacingAndGlyphs" stroke="#1a1a1a" stroke-width="0.9">Период</text>
<rect x="1838.5" y="991" width="179.5" height="28" fill="#fff" rx="7" stroke="#6a6a6a" stroke-width="1"/>
<text x="1845" y="1017" font-family="Liberation Sans" font-size="26" fill="#1a1a1a" textLength="54" lengthAdjust="spacingAndGlyphs">20,0</text>
<path d="M2000,996 L2007,1004 L2000,1012 L1993,1004 Z" fill="none" stroke="#2a2a2a" stroke-width="2.5"/>
<rect x="1836" y="1030" width="208" height="28.5" fill="url(#gCombo)" rx="7" stroke="#6a6a6a" stroke-width="1"/>
<text x="1845" y="1051.5" font-family="Liberation Sans" font-size="24" fill="#1a1a1a">с</text>
<path d="M2017,1040.25 L2024,1047.25 L2031,1040.25" fill="none" stroke="#2a2a2a" stroke-width="3"/>
<text x="1940.7" y="1097" font-family="Liberation Sans" font-size="34" fill="#1a1a1a" font-style="italic" text-anchor="middle" textLength="96" lengthAdjust="spacingAndGlyphs" stroke="#1a1a1a" stroke-width="0.9">Архив</text>
<rect x="1836" y="1110.6" width="208" height="28" fill="url(#gCombo)" rx="7" stroke="#6a6a6a" stroke-width="1"/>
<text x="1845" y="1131.6" font-family="Liberation Sans" font-size="24" fill="#1a1a1a" textLength="37" lengthAdjust="spacingAndGlyphs">Все</text>
<path d="M2017,1120.6 L2024,1127.6 L2031,1120.6" fill="none" stroke="#2a2a2a" stroke-width="3"/>
<rect x="1831" y="1151" width="218" height="2.5" fill="#000"/>
<text x="1940" y="1182" font-family="Liberation Sans" font-size="24" fill="#1f1f1f" text-anchor="middle" textLength="154" lengthAdjust="spacingAndGlyphs">Y:100%(0%)</text>
<rect x="1836" y="1190" width="66" height="35" fill="url(#gBtnG)" rx="5" stroke="#6a6a6a" stroke-width="1"/>
<rect x="1908" y="1190" width="66" height="35" fill="url(#gBtnG)" rx="5" stroke="#6a6a6a" stroke-width="1"/>
<rect x="1836" y="1230" width="66" height="34" fill="url(#gBtnG)" rx="5" stroke="#6a6a6a" stroke-width="1"/>
<rect x="1908" y="1230" width="66" height="34" fill="url(#gBtnG)" rx="5" stroke="#6a6a6a" stroke-width="1"/>
<rect x="1978" y="1200" width="66" height="55.59999999999991" fill="url(#gBtnG)" rx="5" stroke="#6a6a6a" stroke-width="1"/>
<text x="1869" y="1217" font-family="Liberation Sans" font-size="30" fill="#1a1a1a" font-weight="bold" text-anchor="middle">+</text>
<rect x="1864" y="1248" width="10" height="3" fill="#1a1a1a"/>
<path d="M1941,1199 L1954,1212 L1928,1212 Z" fill="#1a1a1a"/>
<path d="M1928,1241 L1954,1241 L1941,1254 Z" fill="#1a1a1a"/>
<text x="2011" y="1238" font-family="Liberation Sans" font-size="28" fill="#1a1a1a" font-weight="bold" text-anchor="middle" textLength="37" lengthAdjust="spacingAndGlyphs">1:1</text>
<rect x="1829.6" y="1396" width="228.2" height="36" fill="url(#gBtnG)" rx="5" stroke="#6a6a6a" stroke-width="1"/>
<circle cx="1854" cy="1414" r="17" fill="#f8f8f8" stroke="#3a3a3a" stroke-width="3"/>
<path d="M1849,1406 L1861,1414 L1849,1422 Z" fill="#1a1a1a"/>
<text x="1883" y="1426" font-family="Liberation Sans" font-size="28" fill="#2a2a2a" textLength="172" lengthAdjust="spacingAndGlyphs">Играть демо</text>
<line x1="1609.5" y1="1452" x2="1609.5" y2="1496" stroke="#6a6a6a" stroke-width="1.2"/>
<line x1="1612.0" y1="1452" x2="1612.0" y2="1496" stroke="#8a8a8a" stroke-width="1.2"/>
<line x1="1767" y1="1452" x2="1767" y2="1496" stroke="#6a6a6a" stroke-width="1.2"/>
<line x1="1769.5" y1="1452" x2="1769.5" y2="1496" stroke="#8a8a8a" stroke-width="1.2"/>
<path d="M1563,1461 L1570,1467 L1576,1460 L1581,1465 L1585,1462 L1594,1484 L1577,1489 Z" fill="#e6eaf6" stroke="#3a62c8" stroke-width="2"/>
<path d="M1572,1470 L1580,1468 L1584,1478" fill="none" stroke="#b8c4e0" stroke-width="1.5"/>
<rect x="1634.4" y="1457.8" width="14" height="14" fill="#f4f4f8" stroke="#c0c0c8" stroke-width="1"/>
<rect x="1626.7" y="1470" width="29.3" height="12.8" fill="#e4e4ea" rx="3" stroke="#a8a8b0" stroke-width="1"/>
<rect x="1634" y="1474" width="16" height="4" fill="#1a78e0"/>
<rect x="1631.7" y="1480.6" width="20" height="9.4" fill="#fafafa" stroke="#b0b0b0" stroke-width="1"/>
<line x1="1633" y1="1480.6" x2="1651" y2="1480.6" stroke="#505050" stroke-width="1.5"/>
<path d="M1669,1469 L1677,1477 L1685,1469" fill="none" stroke="#1e1e1e" stroke-width="2.6"/>
<path d="M1741,1469 L1749,1477 L1757,1469" fill="none" stroke="#1e1e1e" stroke-width="2.6"/>
<rect x="1702" y="1458" width="27" height="31" fill="#d8d8d8" stroke="#3a3a3a" stroke-width="1.6"/>
<rect x="1704" y="1460" width="23" height="7" fill="#b8b8b8"/>
<rect x="1704" y="1468" width="23" height="2.5" fill="#f0f040"/>
<line x1="1704" y1="1472" x2="1718" y2="1472" stroke="#aaaaaa" stroke-width="1.2"/>
<line x1="1704" y1="1477" x2="1718" y2="1477" stroke="#aaaaaa" stroke-width="1.2"/>
<line x1="1704" y1="1482" x2="1718" y2="1482" stroke="#aaaaaa" stroke-width="1.2"/>
<path d="M1713,1468 L1729,1476 L1721,1478 L1716,1483 Z" fill="#f0e818" stroke="#1a1a1a" stroke-width="1.5"/>
<circle cx="1699.5" cy="1459" r="1.6" fill="#50b050"/>
<circle cx="1728.5" cy="1459" r="1.6" fill="#50b050"/>
<circle cx="1699.5" cy="1489" r="1.6" fill="#50b050"/>
<circle cx="1728.5" cy="1489" r="1.6" fill="#50b050"/>
<circle cx="1800" cy="1474" r="16" fill="url(#gGreen)"/>
<text x="1837" y="1483" font-family="Liberation Sans" font-size="25" fill="#2e2e2e" textLength="133" lengthAdjust="spacingAndGlyphs">Нет стиля</text>
<text x="1985" y="1483" font-family="Liberation Sans" font-size="25" fill="#ee1111" textLength="49" lengthAdjust="spacingAndGlyphs">root</text>
<rect x="2108" y="40" width="1867" height="1257" fill="url(#gDlg)"/>
<rect x="2108" y="40" width="1867" height="2" fill="#79b4e0"/>
<rect x="3968" y="40" width="7" height="1257" fill="#79b4e0"/>
<rect x="2108" y="1295" width="1867" height="2.3" fill="#70b8e8"/>
<rect x="2108" y="40" width="1.5" height="1257" fill="#a8cce8"/>
<rect x="2121" y="48" width="29" height="27" fill="#5a8ac0" stroke="#2a3a5a" stroke-width="2"/>
<rect x="2125" y="52" width="21" height="8" fill="#1a3a1a"/>
<rect x="2123" y="63" width="25" height="5" fill="#b8d8f0"/>
<path d="M2132,60 L2150,79" fill="none" stroke="#555" stroke-width="4"/>
<circle cx="2180.7" cy="63.6" r="15" fill="url(#gRing)"/>
<circle cx="2180.7" cy="62.6" r="13" fill="url(#gBtn)"/>
<circle cx="2180.7" cy="62.6" r="1.5" fill="#444"/>
<text x="2695" y="72.2" font-family="Liberation Sans" font-size="22.5" fill="#1e1e1e" textLength="688" lengthAdjust="spacingAndGlyphs">Страница проекта: /prj_AGLKS/pg_so/pg_1/pg_ggraph/pg_2</text>
<circle cx="3800.7" cy="63.8" r="15" fill="url(#gRing)"/>
<circle cx="3800.7" cy="62.8" r="13" fill="url(#gBtn)"/>
<text x="3800.7" y="69.8" font-family="Liberation Sans" font-size="19" fill="#3a3a3a" text-anchor="middle">?</text>
<circle cx="3846.3" cy="63.8" r="15" fill="url(#gRing)"/>
<circle cx="3846.3" cy="62.8" r="13" fill="url(#gBtn)"/>
<path d="M3841.3,59.8 L3846.3,65.8 L3851.3,59.8" fill="none" stroke="#3a3a3a" stroke-width="2.2"/>
<circle cx="3892.4" cy="63.8" r="15" fill="url(#gRing)"/>
<circle cx="3892.4" cy="62.8" r="13" fill="url(#gBtn)"/>
<path d="M3887.4,65.8 L3892.4,59.8 L3897.4,65.8" fill="none" stroke="#3a3a3a" stroke-width="2.2"/>
<circle cx="3938.5" cy="63.8" r="15" fill="url(#gRing)"/>
<circle cx="3938.5" cy="62.8" r="13" fill="url(#gBtn)"/>
<path d="M3932.5,56.8 L3944.5,68.8 M3944.5,56.8 L3932.5,68.8" fill="none" stroke="#3a3a3a" stroke-width="2.2"/>
<rect x="2125" y="142" width="1824.5" height="1071.6" fill="none" rx="5" stroke="#f6f4f2" stroke-width="2"/>
<rect x="2127" y="144" width="1822" height="1070" fill="none" rx="5" stroke="#a8a09c" stroke-width="1" stroke-dasharray="0"/>
<rect x="2126" y="143" width="1822.5" height="1069.6" fill="url(#gPane)" rx="5"/>
<rect x="2126.7" y="104.4" width="132.30000000000018" height="37.599999999999994" fill="url(#gTabD)" rx="6" stroke="#f0eeec" stroke-width="1.5"/>
<text x="2141" y="133" font-family="Liberation Sans" font-size="22.5" fill="#262626" textLength="103.5" lengthAdjust="spacingAndGlyphs">Виджет</text>
<rect x="2267" y="104.4" width="159" height="37.599999999999994" fill="url(#gTabD)" rx="6" stroke="#70c4f0" stroke-width="2"/>
<text x="2281.4" y="133" font-family="Liberation Sans" font-size="22.5" fill="#262626" textLength="130.5" lengthAdjust="spacingAndGlyphs">Атрибуты</text>
<rect x="2434" y="104.4" width="173.5" height="37.599999999999994" fill="url(#gTabD)" rx="6" stroke="#f0eeec" stroke-width="1.5"/>
<text x="2448.6" y="133" font-family="Liberation Sans" font-size="22.5" fill="#262626" textLength="144.7" lengthAdjust="spacingAndGlyphs">Обработка</text>
<rect x="2615.7" y="99.5" width="102" height="44" fill="url(#gTabDS)" rx="6" stroke="#f4f2f0" stroke-width="1.5"/>
<rect x="2617" y="140" width="99" height="5" fill="#dedad8"/>
<text x="2630" y="130.9" font-family="Liberation Sans" font-size="22.5" fill="#262626" textLength="72.5" lengthAdjust="spacingAndGlyphs">Связи</text>
<rect x="2153" y="168.6" width="1769" height="1017.4" fill="#ffffff" rx="5" stroke="#9c9692" stroke-width="1.5"/>
<rect x="2154" y="169.5" width="1767" height="39" fill="url(#gHdr)" rx="4"/>
<rect x="2154" y="207.5" width="1767" height="2.2" fill="#aaa4a0"/>
<text x="2161" y="197" font-family="Liberation Sans" font-size="22.5" fill="#1c1c1c" textLength="49" lengthAdjust="spacingAndGlyphs">Имя</text>
<text x="2361" y="197" font-family="Liberation Sans" font-size="22.5" fill="#1c1c1c" textLength="123" lengthAdjust="spacingAndGlyphs">Значение</text>
<rect x="2350" y="186" width="2" height="2" fill="#8a8480"/>
<rect x="3914" y="186" width="2" height="2" fill="#8a8480"/>
<rect x="2350" y="191" width="2" height="2" fill="#8a8480"/>
<rect x="3914" y="191" width="2" height="2" fill="#8a8480"/>
<rect x="2350" y="196" width="2" height="2" fill="#8a8480"/>
<rect x="3914" y="196" width="2" height="2" fill="#8a8480"/>
<rect x="2154" y="238" width="1767" height="28" fill="#f6f5f4"/>
<rect x="2154" y="294" width="1767" height="28" fill="#f6f5f4"/>
<rect x="2154" y="350" width="1767" height="28" fill="#f6f5f4"/>
<rect x="2154" y="406" width="1767" height="28" fill="#f6f5f4"/>
<rect x="2154" y="462" width="1767" height="28" fill="#f6f5f4"/>
<rect x="2154" y="518" width="1767" height="28" fill="#f6f5f4"/>
<rect x="2154" y="574" width="1767" height="28" fill="#f6f5f4"/>
<rect x="2154" y="630" width="1767" height="28" fill="#f6f5f4"/>
<rect x="2154" y="686" width="1767" height="28" fill="#f6f5f4"/>
<rect x="2154" y="742" width="1767" height="28" fill="#f6f5f4"/>
<rect x="2154" y="798" width="1767" height="28" fill="#f6f5f4"/>
<rect x="2154" y="854" width="1767" height="28" fill="#f6f5f4"/>
<rect x="2154" y="910" width="1767" height="28" fill="#f6f5f4"/>
<rect x="2154" y="966" width="1767" height="28" fill="#f6f5f4"/>
<rect x="2154" y="1022" width="1767" height="28" fill="#f6f5f4"/>
<rect x="2154" y="1078" width="1767" height="28" fill="#f6f5f4"/>
<rect x="2274" y="826" width="1647" height="28" fill="#93c8ee"/>
<path d="M2172.7,211 V406" fill="none" stroke="#9a9a9a" stroke-width="1.6" stroke-dasharray="5,3"/>
<path d="M2172.7,406 V588" fill="none" stroke="#a8a8a8" stroke-width="1.6"/>
<path d="M2213,434 V560 M2213,560 H2233 M2213,476 H2233 M2213,504 H2233 M2213,532 H2233" fill="none" stroke="#a8a8a8" stroke-width="1.6"/>
<path d="M2213,616 V1120 M2213,1036 H2233 M2213,1064 H2233 M2213,1092 H2233 M2213,1120 H2233" fill="none" stroke="#a8a8a8" stroke-width="1.6"/>
<path d="M2252.5,630 V1008 M2252.5,644 H2273 M2252.5,672 H2273 M2252.5,700 H2273 M2252.5,728 H2273 M2252.5,756 H2273 M2252.5,784 H2273 M2252.5,812 H2273 M2252.5,840 H2273 M2252.5,868 H2273 M2252.5,896 H2273 M2252.5,924 H2273 M2252.5,952 H2273 M2252.5,980 H2273 M2252.5,1008 H2273" fill="none" stroke="#a8a8a8" stroke-width="1.6"/>
<line x1="2182" y1="224" x2="2193.6" y2="224" stroke="#aaaaaa" stroke-width="1.8"/>
<path d="M2168.7,219 L2175.7,224 L2168.7,229" fill="none" stroke="#2a2a2a" stroke-width="2.2"/>
<text transform="translate(2201.7 232) scale(1.18 1)" font-family="Liberation Sans" font-size="23" fill="#1c1c1c">.</text>
<line x1="2182" y1="252" x2="2193.6" y2="252" stroke="#aaaaaa" stroke-width="1.8"/>
<path d="M2168.7,247 L2175.7,252 L2168.7,257" fill="none" stroke="#2a2a2a" stroke-width="2.2"/>
<text transform="translate(2201.7 260) scale(1.18 1)" font-family="Liberation Sans" font-size="23" fill="#1c1c1c">el1</text>
<line x1="2182" y1="280" x2="2193.6" y2="280" stroke="#aaaaaa" stroke-width="1.8"/>
<path d="M2168.7,275 L2175.7,280 L2168.7,285" fill="none" stroke="#2a2a2a" stroke-width="2.2"/>
<text transform="translate(2201.7 288) scale(1.18 1)" font-family="Liberation Sans" font-size="23" fill="#1c1c1c">el2</text>
<line x1="2182" y1="308" x2="2193.6" y2="308" stroke="#aaaaaa" stroke-width="1.8"/>
<path d="M2168.7,303 L2175.7,308 L2168.7,313" fill="none" stroke="#2a2a2a" stroke-width="2.2"/>
<text transform="translate(2201.7 316) scale(1.18 1)" font-family="Liberation Sans" font-size="23" fill="#1c1c1c">el3</text>
<line x1="2182" y1="336" x2="2193.6" y2="336" stroke="#aaaaaa" stroke-width="1.8"/>
<path d="M2168.7,331 L2175.7,336 L2168.7,341" fill="none" stroke="#2a2a2a" stroke-width="2.2"/>
<text transform="translate(2201.7 344) scale(1.18 1)" font-family="Liberation Sans" font-size="23" fill="#1c1c1c">el4</text>
<line x1="2182" y1="364" x2="2193.6" y2="364" stroke="#aaaaaa" stroke-width="1.8"/>
<path d="M2168.7,359 L2175.7,364 L2168.7,369" fill="none" stroke="#2a2a2a" stroke-width="2.2"/>
<text transform="translate(2201.7 372) scale(1.18 1)" font-family="Liberation Sans" font-size="23" fill="#1c1c1c">el5</text>
<line x1="2182" y1="392" x2="2193.6" y2="392" stroke="#aaaaaa" stroke-width="1.8"/>
<path d="M2168.7,387 L2175.7,392 L2168.7,397" fill="none" stroke="#2a2a2a" stroke-width="2.2"/>
<text transform="translate(2201.7 400) scale(1.18 1)" font-family="Liberation Sans" font-size="23" fill="#1c1c1c">el6</text>
<line x1="2182" y1="420" x2="2193.6" y2="420" stroke="#aaaaaa" stroke-width="1.8"/>
<path d="M2167.7,417 L2172.7,423 L2177.7,417" fill="none" stroke="#2a2a2a" stroke-width="2.2"/>
<text transform="translate(2201.7 428) scale(1.18 1)" font-family="Liberation Sans" font-size="23" fill="#1c1c1c">el7</text>
<path d="M2209,443 L2216,448 L2209,453" fill="none" stroke="#2a2a2a" stroke-width="2.2"/>
<line x1="2222" y1="448" x2="2233" y2="448" stroke="#aaaaaa" stroke-width="1.8"/>
<text transform="translate(2240.8 456) scale(1.18 1)" font-family="Liberation Sans" font-size="23" fill="#1c1c1c">Param...</text>
<text transform="translate(2240.8 484) scale(1.18 1)" font-family="Liberation Sans" font-size="23" fill="#1c1c1c">color</text>
<text transform="translate(2359 484) scale(1.18 1)" font-family="Liberation Sans" font-size="23" fill="#1c1c1c">magenta</text>
<text transform="translate(2240.8 512) scale(1.18 1)" font-family="Liberation Sans" font-size="23" fill="#1c1c1c">digComs</text>
<text transform="translate(2240.8 540) scale(1.18 1)" font-family="Liberation Sans" font-size="23" fill="#1c1c1c">digRev...</text>
<text transform="translate(2240.8 568) scale(1.18 1)" font-family="Liberation Sans" font-size="23" fill="#1c1c1c">digStts</text>
<line x1="2182" y1="588" x2="2193.6" y2="588" stroke="#aaaaaa" stroke-width="1.8"/>
<path d="M2167.7,585 L2172.7,591 L2177.7,585" fill="none" stroke="#2a2a2a" stroke-width="2.2"/>
<text transform="translate(2201.7 596) scale(1.18 1)" font-family="Liberation Sans" font-size="23" fill="#1c1c1c">el8</text>
<path d="M2208,613 L2213,619 L2218,613" fill="none" stroke="#2a2a2a" stroke-width="2.2"/>
<line x1="2222" y1="616" x2="2233" y2="616" stroke="#aaaaaa" stroke-width="1.8"/>
<text transform="translate(2240.8 624) scale(1.18 1)" font-family="Liberation Sans" font-size="23" fill="#1c1c1c">Param...</text>
<text x="2359" y="624" font-family="Liberation Sans" font-size="22.5" fill="#1c1c1c" textLength="1538" lengthAdjust="spacingAndGlyphs">Раздельно: val:test, , , , val:data:&lt;d s=&quot;1&quot; tm=&quot;1369465209&quot; tm_grnd=&quot;1369465200&quot; per=&quot;1&quot;&gt;0 4 1 5 5 10&lt;/d&gt;, , , val:...</text>
<text transform="translate(2280 652) scale(1.18 1)" font-family="Liberation Sans" font-size="23" fill="#1c1c1c">na...</text>
<text transform="translate(2359 652) scale(1.18 1)" font-family="Liberation Sans" font-size="23" fill="#1c1c1c">val:test</text>
<text transform="translate(2280 680) scale(1.18 1)" font-family="Liberation Sans" font-size="23" fill="#1c1c1c">dscr</text>
<text transform="translate(2280 708) scale(1.18 1)" font-family="Liberation Sans" font-size="23" fill="#1c1c1c">aMax</text>
<text transform="translate(2280 736) scale(1.18 1)" font-family="Liberation Sans" font-size="23" fill="#1c1c1c">aMin</text>
<text transform="translate(2280 764) scale(1.18 1)" font-family="Liberation Sans" font-size="23" fill="#1c1c1c">addr</text>
<text x="2359" y="764" font-family="Liberation Sans" font-size="22.5" fill="#1c1c1c" textLength="1113" lengthAdjust="spacingAndGlyphs">val:data:&lt;d s=&quot;1&quot; tm=&quot;1369465209&quot; tm_grnd=&quot;1369465200&quot; per=&quot;1&quot;&gt;0 4 1 5 5 10&lt;/d&gt;</text>
<text transform="translate(2280 792) scale(1.18 1)" font-family="Liberation Sans" font-size="23" fill="#1c1c1c">ed</text>
<text transform="translate(2280 820) scale(1.18 1)" font-family="Liberation Sans" font-size="23" fill="#1c1c1c">log</text>
<text transform="translate(2280 848) scale(1.18 1)" font-family="Liberation Sans" font-size="23" fill="#1c1c1c">max</text>
<text transform="translate(2359 848) scale(1.18 1)" font-family="Liberation Sans" font-size="23" fill="#1c1c1c">val:12</text>
<text transform="translate(2280 876) scale(1.18 1)" font-family="Liberation Sans" font-size="23" fill="#1c1c1c">min</text>
<text transform="translate(2359 876) scale(1.18 1)" font-family="Liberation Sans" font-size="23" fill="#1c1c1c">val:2</text>
<text transform="translate(2280 904) scale(1.18 1)" font-family="Liberation Sans" font-size="23" fill="#1c1c1c">pM...</text>
<text transform="translate(2280 932) scale(1.18 1)" font-family="Liberation Sans" font-size="23" fill="#1c1c1c">pM...</text>
<text transform="translate(2280 960) scale(1.18 1)" font-family="Liberation Sans" font-size="23" fill="#1c1c1c">prec</text>
<text transform="translate(2359 960) scale(1.18 1)" font-family="Liberation Sans" font-size="23" fill="#1c1c1c">val:4</text>
<text transform="translate(2280 988) scale(1.18 1)" font-family="Liberation Sans" font-size="23" fill="#1c1c1c">wMax</text>
<text transform="translate(2280 1016) scale(1.18 1)" font-family="Liberation Sans" font-size="23" fill="#1c1c1c">wMin</text>
<text transform="translate(2240.8 1044) scale(1.18 1)" font-family="Liberation Sans" font-size="23" fill="#1c1c1c">color</text>
<text transform="translate(2359 1044) scale(1.18 1)" font-family="Liberation Sans" font-size="23" fill="#1c1c1c">yellow</text>
<text transform="translate(2240.8 1072) scale(1.18 1)" font-family="Liberation Sans" font-size="23" fill="#1c1c1c">digComs</text>
<text transform="translate(2240.8 1100) scale(1.18 1)" font-family="Liberation Sans" font-size="23" fill="#1c1c1c">digRev...</text>
<text transform="translate(2240.8 1128) scale(1.18 1)" font-family="Liberation Sans" font-size="23" fill="#1c1c1c">digStts</text>
<rect x="3749" y="1231" width="202" height="41" fill="url(#gBtnD)" rx="6" stroke="#62b8ec" stroke-width="2"/>
<circle cx="3787.7" cy="1252" r="14.5" fill="url(#gRed)" stroke="#a01010" stroke-width="1"/>
<path d="M3781.5,1245.8 L3793.9,1258.2 M3793.9,1245.8 L3781.5,1258.2" fill="none" stroke="#fff" stroke-width="3"/>
<text x="3817" y="1261" font-family="Liberation Sans" font-size="22.5" fill="#1e1e1e" textLength="109.5" lengthAdjust="spacingAndGlyphs">Закрыть</text>
<rect x="72" y="1520" width="1978" height="828" fill="#7db2da"/>
<rect x="88" y="1530" width="1950" height="60" fill="url(#gTitle2)" rx="6"/>
<rect x="88" y="1576" width="1950" height="44" fill="#e2e0de"/>
<rect x="92" y="1530" width="1942" height="2" fill="#fafaf9"/>
<rect x="88" y="1600" width="4" height="700" fill="#dcdad8"/>
<rect x="100" y="1537" width="31.6" height="28.5" fill="#d8d8d8" rx="2" stroke="#555" stroke-width="1.6"/>
<rect x="103" y="1540" width="26" height="19" fill="#1e1e1e"/>
<text x="105" y="1550" font-family="Liberation Sans" font-size="9" fill="#e0e0e0">&gt;_</text>
<circle cx="160.8" cy="1551.8" r="15" fill="url(#gRing)"/>
<circle cx="160.8" cy="1550.8" r="13" fill="url(#gBtn)"/>
<circle cx="160.8" cy="1550.8" r="1.5" fill="#444"/>
<text x="956.3" y="1560.7" font-family="Liberation Sans" font-size="23" fill="#1e1e1e" textLength="211" lengthAdjust="spacingAndGlyphs">/home/user : bash</text>
<circle cx="1915.7" cy="1553" r="15" fill="url(#gRing)"/>
<circle cx="1915.7" cy="1552" r="13" fill="url(#gBtn)"/>
<path d="M1910.7,1549 L1915.7,1555 L1920.7,1549" fill="none" stroke="#3a3a3a" stroke-width="2.2"/>
<circle cx="1961" cy="1553" r="15" fill="url(#gRing)"/>
<circle cx="1961" cy="1552" r="13" fill="url(#gBtn)"/>
<path d="M1956,1555 L1961,1549 L1966,1555" fill="none" stroke="#3a3a3a" stroke-width="2.2"/>
<circle cx="2007" cy="1553" r="15" fill="url(#gRing)"/>
<circle cx="2007" cy="1552" r="13" fill="url(#gBtn)"/>
<path d="M2001,1546 L2013,1558 M2013,1546 L2001,1558" fill="none" stroke="#3a3a3a" stroke-width="2.2"/>
<rect x="96.8" y="1578.7" width="62.2" height="33" fill="#d6d4d2" rx="4"/>
<text x="108.2" y="1604" font-family="Liberation Sans" font-size="24" fill="#222" textLength="38.10000000000001" lengthAdjust="spacingAndGlyphs">File</text>
<text x="180.6" y="1604" font-family="Liberation Sans" font-size="24" fill="#222" textLength="45.400000000000006" lengthAdjust="spacingAndGlyphs">Edit</text>
<text x="259" y="1604" font-family="Liberation Sans" font-size="24" fill="#222" textLength="56" lengthAdjust="spacingAndGlyphs">View</text>
<text x="349.5" y="1604" font-family="Liberation Sans" font-size="24" fill="#222" textLength="134.5" lengthAdjust="spacingAndGlyphs">Bookmarks</text>
<text x="519.7" y="1604" font-family="Liberation Sans" font-size="24" fill="#222" textLength="99.89999999999998" lengthAdjust="spacingAndGlyphs">Settings</text>
<text x="655.6" y="1604" font-family="Liberation Sans" font-size="24" fill="#222" textLength="52.69999999999993" lengthAdjust="spacingAndGlyphs">Help</text>
<rect x="91.7" y="1615.6" width="1906.3" height="732" fill="#000"/>
<clipPath id="cpTerm"><rect x="91.7" y="1615.6" width="1906.3" height="678"/></clipPath>
<g clip-path="url(#cpTerm)">
<text x="94.5" y="1639.6" font-family="Liberation Mono" font-size="23.33" fill="#c4c4c4" style="white-space:pre">root@debian:/home/user# lsb_release -a</text>
<text x="94.5" y="1667.6" font-family="Liberation Mono" font-size="23.33" fill="#c4c4c4" style="white-space:pre">No LSB modules are available.</text>
<text x="94.5" y="1695.6" font-family="Liberation Mono" font-size="23.33" fill="#c4c4c4" style="white-space:pre">Distributor ID: Debian</text>
<text x="94.5" y="1723.6" font-family="Liberation Mono" font-size="23.33" fill="#c4c4c4" style="white-space:pre">Description:    Debian GNU/Linux 7.8 (wheezy)</text>
<text x="94.5" y="1751.6" font-family="Liberation Mono" font-size="23.33" fill="#c4c4c4" style="white-space:pre">Release:        7.8</text>
<text x="94.5" y="1779.6" font-family="Liberation Mono" font-size="23.33" fill="#c4c4c4" style="white-space:pre">Codename:       wheezy</text>
<text x="94.5" y="1807.6" font-family="Liberation Mono" font-size="23.33" fill="#c4c4c4" style="white-space:pre">root@debian:/home/user# dpkg --list openscada*</text>
<text x="94.5" y="1835.6" font-family="Liberation Mono" font-size="23.33" fill="#c4c4c4" style="white-space:pre">Желаемый=неизвестно[u]/установить[i]/удалить[r]/вычистить[p]/зафиксировать[h]</text>
<text x="94.5" y="1863.6" font-family="Liberation Mono" font-size="23.33" fill="#c4c4c4" style="white-space:pre">| Состояние=не[n]/установлен[i]/настроен[c]/распакован[U]/частично настроен[F]/</text>
<text x="94.5" y="1891.6" font-family="Liberation Mono" font-size="23.33" fill="#c4c4c4" style="white-space:pre">            частично установлен[H]/trig-aWait/Trig-pend</text>
<text x="94.5" y="1919.6" font-family="Liberation Mono" font-size="23.33" fill="#c4c4c4" style="white-space:pre">|/ Ошибка?=(нет)/требуется переустановка[R] (верхний регистр</text>
<text x="94.5" y="1947.6" font-family="Liberation Mono" font-size="23.33" fill="#c4c4c4" style="white-space:pre">в полях состояния и ошибки указывает на ненормальную ситуацию)</text>
<text x="94.5" y="1975.6" font-family="Liberation Mono" font-size="23.33" fill="#c4c4c4" style="white-space:pre">||/ Имя                      Версия       Архитекту Описание</text>
<text x="94.5" y="2003.6" font-family="Liberation Mono" font-size="23.33" fill="#c4c4c4" style="white-space:pre">+++-===========================-==================-===============================================================================</text>
<text x="94.5" y="2031.6" font-family="Liberation Mono" font-size="23.33" fill="#c4c4c4" style="white-space:pre">ii  openscada                   0.9+r2345-1        amd64              Open SCADA system project</text>
<text x="94.5" y="2059.6" font-family="Liberation Mono" font-size="23.33" fill="#c4c4c4" style="white-space:pre">ii  openscada-dbg               0.9+r2345-1        amd64              Debug symbols for OpenSCADA</text>
<text x="94.5" y="2087.6" font-family="Liberation Mono" font-size="23.33" fill="#c4c4c4" style="white-space:pre">ii  openscada-dev               0.9+r2345-1        amd64              OpenSCADA development</text>
<text x="94.5" y="2115.6" font-family="Liberation Mono" font-size="23.33" fill="#c4c4c4" style="white-space:pre">ii  openscada-doc-ru            0.9+r2275-1        all                OpenSCADA documents (RU)</text>
<text x="94.5" y="2143.6" font-family="Liberation Mono" font-size="23.33" fill="#c4c4c4" style="white-space:pre">ii  openscada-libdb-main        0.9+r2345-1        all                Main OpenSCADA libraries for DAQ and other into SQLite DB</text>
<text x="94.5" y="2171.6" font-family="Liberation Mono" font-size="23.33" fill="#c4c4c4" style="white-space:pre">ii  openscada-libdb-vca         0.9+r2345-1        all                Visual components libraries into SQLite DB</text>
<text x="94.5" y="2199.6" font-family="Liberation Mono" font-size="23.33" fill="#c4c4c4" style="white-space:pre">un  openscada-libdb.main        &lt;нет&gt;                              (описание недоступно)</text>
<text x="94.5" y="2227.6" font-family="Liberation Mono" font-size="23.33" fill="#c4c4c4" style="white-space:pre">un  openscada-libdb.vca         &lt;нет&gt;                              (описание недоступно)</text>
<text x="94.5" y="2255.6" font-family="Liberation Mono" font-size="23.33" fill="#c4c4c4" style="white-space:pre">ii  openscada-model-aglks       0.9+r2345-1        all                Model &quot;AGLKS&quot; data bases and config (Demo: EN,RU,UK)</text>
<text x="94.5" y="2283.6" font-family="Liberation Mono" font-size="23.33" fill="#c4c4c4" style="white-space:pre">ii  openscada-model-boiler      0.9+r2345-1        all                Model &quot;Boiler&quot; data bases and config (EN,RU,UK)</text>
<text x="94.5" y="2310.5" font-family="Liberation Mono" font-size="23.33" fill="#c4c4c4" style="white-space:pre">ii  openscada-model-lib         0.9+r2345-1        all                Model &quot;Lib&quot; data bases and config (EN,RU,UK)</text>
</g>
<rect x="1998" y="1615.6" width="40" height="700" fill="#dcdad8"/>
<path d="M2008,1638 L2014.7,1631 L2021.4,1638" fill="none" stroke="#333" stroke-width="2.6"/>
<rect x="2002.5" y="1648" width="25" height="660" fill="#b0aaa6" rx="6"/>
<rect x="2004" y="1993.8" width="22" height="320" fill="#e2e0de" rx="6"/>
<rect x="2035.5" y="1520" width="14" height="780" fill="#7db2da"/>
<rect x="0" y="2294" width="4020" height="60" fill="#fff"/></svg></body></html>
